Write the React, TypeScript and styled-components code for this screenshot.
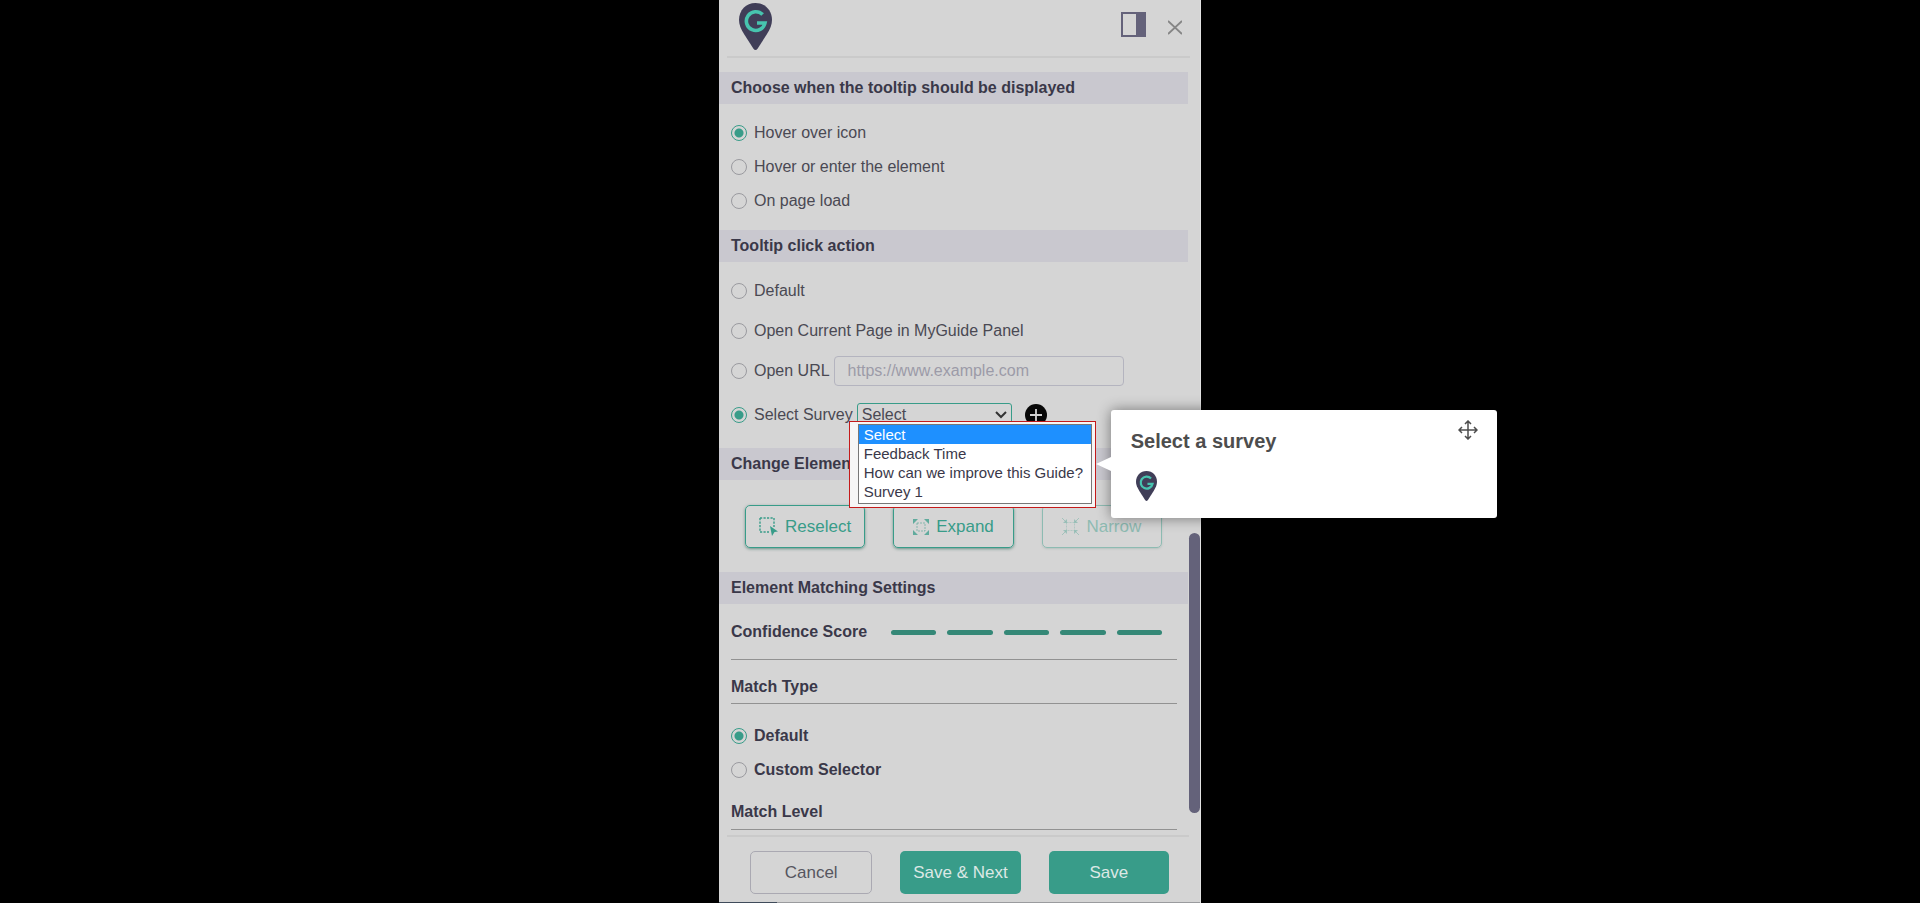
import React from "react";
import styled, { createGlobalStyle, css } from "styled-components";

const ink = "#3a3849";
const softInk = "#4a4953";
const teal = "#389c89";

const GlobalStyle = createGlobalStyle`
  * { box-sizing: border-box; }
  body {
    margin: 0;
    background: #000;
    color: ${ink};
    font-family: "Liberation Sans", Arial, sans-serif;
    font-size: 16px;
    line-height: 20px;
  }
  button, input, select { font: inherit; color: inherit; margin: 0; }
`;

const Page = styled.main`
  display: flex;
  justify-content: center;
  min-height: 100vh;
`;

const Panel = styled.section`
  display: flex;
  flex-direction: column;
  width: 100%;
  max-width: 482px;
  background: #d5d5d5;
  border-right: 1px solid #e2e2e2;
`;

const Header = styled.header`
  display: flex;
  align-items: flex-start;
  gap: 22px;
  height: 58px;
  margin: 0 10px 0 8px;
  padding: 3px 8px 0 12px;
  border-bottom: 2px solid #cacaca;
`;

const HeaderSpacer = styled.div`
  flex: 1;
`;

const IconButton = styled.button`
  display: flex;
  padding: 0;
  margin-top: 9px;
  border: 0;
  background: none;
  cursor: pointer;
`;

const Body = styled.div`
  position: relative;
  flex: 1;
  padding: 14px 12px 5px 0;
`;

const ScrollThumb = styled.div`
  position: absolute;
  right: 0;
  top: 475px;
  bottom: 22px;
  width: 11px;
  border-radius: 6px;
  background: #64627a;
`;

const SectionTitle = styled.h2`
  margin: 0;
  padding: 6px 12px;
  background: #c9c8cf;
  font-size: 16px;
  line-height: 20px;
  font-weight: 700;
`;

const Group = styled.div<{ $gap: number; $pad: string }>`
  display: flex;
  flex-direction: column;
  gap: ${(p) => p.$gap}px;
  padding: ${(p) => p.$pad};
`;

const Row = styled.div<{ $tall?: boolean }>`
  display: flex;
  align-items: center;
  gap: 4px;
  height: ${(p) => (p.$tall ? 28 : 20)}px;
`;

const RadioLabel = styled.label<{ $bold?: boolean }>`
  display: flex;
  align-items: center;
  gap: 7px;
  color: ${(p) => (p.$bold ? ink : softInk)};
  font-weight: ${(p) => (p.$bold ? 700 : 400)};
  white-space: nowrap;
`;

const RadioInput = styled.input`
  appearance: none;
  width: 16px;
  height: 16px;
  border: 1px solid #9a9a9f;
  border-radius: 50%;
  &:checked {
    border-color: ${teal};
    background: radial-gradient(circle, ${teal} 4px, transparent 5px);
  }
`;

const UrlInput = styled.input`
  width: 290px;
  height: 30px;
  padding: 0 13px;
  border: 1px solid #b4b4bf;
  border-radius: 4px;
  background: transparent;
  &::placeholder { color: #9c9ba8; opacity: 1; }
`;

const SurveyField = styled.div`
  position: relative;
  display: flex;
`;

const SurveySelect = styled.select`
  appearance: none;
  width: 155px;
  height: 24px;
  padding: 0 4px;
  border: 1px solid ${teal};
  border-radius: 3px;
  background: transparent;
  color: ${softInk};
`;

const Chevron = styled.svg`
  position: absolute;
  right: 5px;
  top: 8px;
  pointer-events: none;
`;

const AddButton = styled.button`
  display: flex;
  margin-left: 9px;
  padding: 0;
  border: 0;
  background: none;
`;

const Highlight = styled.div`
  position: absolute;
  z-index: 1;
  left: -8px;
  top: 18px;
  width: 247px;
  height: 87px;
  padding: 2px 3px 3px 8px;
  border: 1px solid #c41a1a;
  background: #f6f6f6;
`;

const OptionList = styled.ul`
  height: 80px;
  margin: 0;
  padding: 0;
  list-style: none;
  border: 1px solid #777;
  background: #fff;
`;

const Option = styled.li<{ $active?: boolean }>`
  padding: 0 5px;
  font-size: 15px;
  line-height: 19px;
  white-space: nowrap;
  ${(p) =>
    p.$active &&
    css`
      background: #1e90ff;
      color: #fff;
    `}
`;

const Tooltip = styled.aside`
  position: absolute;
  z-index: 2;
  left: 254px;
  top: 7px;
  display: flex;
  justify-content: space-between;
  align-items: flex-start;
  width: 386px;
  height: 108px;
  padding: 19px 19px 0 20px;
  border-radius: 3px;
  background: #fff;
  color: #4d4d4d;
  box-shadow: 0 0 14px rgba(0, 0, 0, 0.45);
  &::before {
    content: "";
    position: absolute;
    left: -15px;
    top: 47px;
    border: 7px solid transparent;
    border-right: 15px solid #fff;
    border-left: 0;
  }
`;

const TooltipText = styled.div`
  display: flex;
  flex-direction: column;
  gap: 18px;
`;

const TooltipTitle = styled.h3`
  margin: 0;
  font-size: 20px;
  line-height: 24px;
`;

const TooltipPin = styled.div`
  display: flex;
  padding-left: 5px;
`;

const MoveButton = styled.button`
  display: flex;
  margin-top: -9px;
  padding: 0;
  border: 0;
  background: none;
  color: #4d4d4d;
`;

const ButtonRow = styled.div<{ $pad: string }>`
  display: flex;
  gap: 28px;
  padding: ${(p) => p.$pad};
`;

const Button = styled.button<{ $kind: "outline" | "plain" | "solid" }>`
  display: flex;
  flex: 1;
  align-items: center;
  justify-content: center;
  gap: 7px;
  height: 43px;
  padding: 0;
  border-radius: 5px;
  font-size: 17px;
  white-space: nowrap;
  ${(p) =>
    p.$kind === "outline" &&
    css`
      border: 1px solid ${teal};
      background: transparent;
      color: ${teal};
      box-shadow: 0 1px 3px rgba(0, 80, 60, 0.5);
      &:disabled {
        opacity: 0.45;
        box-shadow: 0 1px 2px rgba(0, 80, 60, 0.3);
      }
    `}
  ${(p) =>
    p.$kind === "plain" &&
    css`
      border: 1px solid #aaa9b2;
      background: transparent;
      color: #565560;
    `}
  ${(p) =>
    p.$kind === "solid" &&
    css`
      border: 0;
      background: ${teal};
      color: #dce8e5;
    `}
`;

const Score = styled.div`
  display: flex;
  align-items: center;
  gap: 24px;
  margin: 0 0 0 12px;
  padding: 18px 26px 17px 0;
  font-weight: 700;
`;

const ScoreBars = styled.div`
  display: flex;
  flex: 1;
  gap: 11px;
`;

const ScoreBar = styled.span`
  flex: 1;
  height: 5px;
  border-radius: 3px;
  background: #358877;
`;

const Rule = styled.hr`
  height: 1px;
  margin: 0 11px 0 12px;
  border: 0;
  background: #929292;
`;

const SubTitle = styled.h3<{ $pad: string }>`
  margin: 0;
  padding: ${(p) => p.$pad};
  font-size: 16px;
  line-height: 20px;
`;

const Footer = styled.footer`
  margin: 0 11px 0 8px;
  border-top: 2px solid #cacaca;
`;

const BottomEdge = styled.div`
  height: 2px;
  background: linear-gradient(to right, #3f4b5a 58px, #9a9b9e 58px);
`;

function Pin({ width, height }: { width: number; height: number }) {
  return (
    <svg width={width} height={height} viewBox="0 0 33 47" aria-hidden="true">
      <path d="M16.5 0C7 0 0 7.300 0 17C0 22 2 26 5 31L14.300 45.500Q16.500 48.500 18.700 45.500L28 31C31 26 33 22 33 17C33 7.300 26 0 16.500 0Z" fill="#403e58" />
      <path d="M23.600 11.600A9.400 9.400 0 1 0 26 20H18" fill="none" stroke="#47c4af" strokeWidth="3.600" />
    </svg>
  );
}

function ReselectIcon() {
  return (
    <svg width="19" height="19" viewBox="0 0 19 19" aria-hidden="true">
      <path d="M1 1H15V10M1 1V15H10" fill="none" stroke="currentColor" strokeWidth="1.400" strokeDasharray="2.200 1.300" />
      <path d="M11 9L19 14.500L15.500 15L13 19Z" fill="currentColor" />
    </svg>
  );
}

function ExpandIcon() {
  return (
    <svg width="16" height="16" viewBox="0 0 16 16" fill="none" stroke="currentColor" aria-hidden="true">
      <path d="M0 0H5L0 5ZM16 0H11L16 5ZM16 16V11L11 16ZM0 16V11L5 16Z" fill="currentColor" stroke="none" opacity="0.75" />
      <rect x="4" y="4" width="8" height="8" strokeDasharray="2 1" opacity="0.5" />
    </svg>
  );
}

function NarrowIcon() {
  return (
    <svg width="17" height="17" viewBox="0 0 17 17" fill="none" stroke="currentColor" aria-hidden="true">
      <path d="M5 1V5H1ZM12 1V5H16ZM16 12H12V16ZM1 12H5V16Z" fill="currentColor" stroke="none" opacity="0.8" />
      <path d="M0 0L4 4M17 0L13 4M17 17L13 13M0 17L4 13" opacity="0.7" />
      <rect x="4.500" y="4.500" width="8" height="8" strokeDasharray="2 1" opacity="0.5" />
    </svg>
  );
}

interface RadioProps {
  group: string;
  label: string;
  checked?: boolean;
  bold?: boolean;
}

function Radio({ group, label, checked, bold }: RadioProps) {
  return (
    <RadioLabel $bold={bold}>
      <RadioInput type="radio" name={group} defaultChecked={checked} />
      {label}
    </RadioLabel>
  );
}

const surveys = ["Select", "Feedback Time", "How can we improve this Guide?", "Survey 1"];

export default function App() {
  return (
    <Page>
      <GlobalStyle />
      <Panel>
        <Header>
          <Pin width={33} height={47} />
          <HeaderSpacer />
          <IconButton aria-label="Dock panel">
            <svg width="25" height="25" viewBox="0 0 25 25">
              <rect x="1" y="1" width="23" height="23" fill="none" stroke="#64627a" strokeWidth="2" />
              <rect x="15" y="0" width="10" height="25" fill="#64627a" />
            </svg>
          </IconButton>
          <IconButton aria-label="Close">
            <svg width="14" height="30" viewBox="0 0 14 30">
              <path d="M0 9L14 22M14 9L0 22" stroke="#858585" strokeWidth="1.800" />
            </svg>
          </IconButton>
        </Header>

        <Body>
          <ScrollThumb />
          <SectionTitle>Choose when the tooltip should be displayed</SectionTitle>
          <Group $gap={14} $pad="19px 12px">
            <Row><Radio group="display" label="Hover over icon" checked /></Row>
            <Row><Radio group="display" label="Hover or enter the element" /></Row>
            <Row><Radio group="display" label="On page load" /></Row>
          </Group>

          <SectionTitle>Tooltip click action</SectionTitle>
          <Group $gap={20} $pad="19px 12px">
            <Row><Radio group="action" label="Default" /></Row>
            <Row><Radio group="action" label="Open Current Page in MyGuide Panel" /></Row>
            <Row>
              <Radio group="action" label="Open URL" />
              <UrlInput aria-label="URL" placeholder="https://www.example.com" />
            </Row>
            <Row $tall>
              <Radio group="action" label="Select Survey" checked />
              <SurveyField>
                <SurveySelect aria-label="Survey">
                  {surveys.map((s) => <option key={s}>{s}</option>)}
                </SurveySelect>
                <Chevron width="12" height="8" viewBox="0 0 12 8">
                  <path d="M1 1L6 6L11 1" fill="none" stroke="#333" strokeWidth="2" />
                </Chevron>
                <Highlight>
                  <OptionList>
                    {surveys.map((s, i) => <Option key={s} $active={i === 0}>{s}</Option>)}
                  </OptionList>
                </Highlight>
                <Tooltip>
                  <TooltipText>
                    <TooltipTitle>Select a survey</TooltipTitle>
                    <TooltipPin><Pin width={21} height={30} /></TooltipPin>
                  </TooltipText>
                  <MoveButton aria-label="Move">
                    <svg width="20" height="20" viewBox="0 0 20 20" fill="none" stroke="currentColor" strokeWidth="1.500">
                      <path d="M10 1V19M1 10H19M7 4L10 1L13 4M7 16L10 19L13 16M4 7L1 10L4 13M16 7L19 10L16 13" />
                    </svg>
                  </MoveButton>
                </Tooltip>
              </SurveyField>
              <AddButton aria-label="Add survey">
                <svg width="22" height="22" viewBox="0 0 22 22">
                  <circle cx="11" cy="11" r="11" fill="#080808" />
                  <path d="M11 5V17M5 11H17" stroke="#d5d5d5" strokeWidth="1.800" />
                </svg>
              </AddButton>
            </Row>
          </Group>

          <SectionTitle>Change Element</SectionTitle>
          <ButtonRow $pad="25px 26px 24px">
            <Button $kind="outline"><ReselectIcon />Reselect</Button>
            <Button $kind="outline"><ExpandIcon />Expand</Button>
            <Button $kind="outline" disabled><NarrowIcon />Narrow</Button>
          </ButtonRow>

          <SectionTitle>Element Matching Settings</SectionTitle>
          <Score>
            Confidence Score
            <ScoreBars>
              <ScoreBar /><ScoreBar /><ScoreBar /><ScoreBar /><ScoreBar />
            </ScoreBars>
          </Score>
          <Rule />
          <SubTitle $pad="17px 12px 6px">Match Type</SubTitle>
          <Rule />
          <Group $gap={14} $pad="22px 12px">
            <Row><Radio group="match" label="Default" checked bold /></Row>
            <Row><Radio group="match" label="Custom Selector" bold /></Row>
          </Group>
          <SubTitle $pad="0 12px 7px">Match Level</SubTitle>
          <Rule />
        </Body>

        <Footer>
          <ButtonRow $pad="14px 20px 8px 23px">
            <Button $kind="plain">Cancel</Button>
            <Button $kind="solid">Save &amp; Next</Button>
            <Button $kind="solid">Save</Button>
          </ButtonRow>
        </Footer>
        <BottomEdge />
      </Panel>
    </Page>
  );
}
